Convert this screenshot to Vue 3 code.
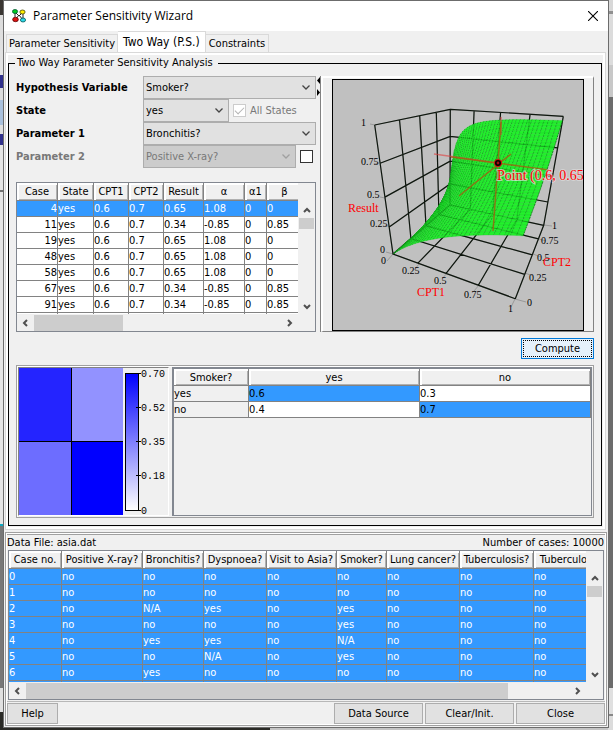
<script setup>
import { ref } from 'vue'

const tabs = ['Parameter Sensitivity', 'Two Way (P.S.)', 'Constraints']
const activeTab = ref('Two Way (P.S.)')

const caseCols = [
  { name: 'Case', width: 41 },
  { name: 'State', width: 36 },
  { name: 'CPT1', width: 35 },
  { name: 'CPT2', width: 35 },
  { name: 'Result', width: 40 },
  { name: 'α', width: 41 },
  { name: 'α1', width: 22 },
  { name: 'β', width: 36 },
]
const high = ['yes', '0.6', '0.7', '0.65', '1.08', '0', '0']
const low = ['yes', '0.6', '0.7', '0.34', '-0.85', '0', '0.85']
const caseRows = [
  ['4', ...high],
  ['11', ...low],
  ['19', ...high],
  ['48', ...high],
  ['58', ...high],
  ['67', ...low],
  ['91', ...low],
]

const dataCols = [
  { name: 'Case no.', width: 53 },
  { name: 'Positive X-ray?', width: 81 },
  { name: 'Bronchitis?', width: 61 },
  { name: 'Dyspnoea?', width: 63 },
  { name: 'Visit to Asia?', width: 70 },
  { name: 'Smoker?', width: 50 },
  { name: 'Lung cancer?', width: 73 },
  { name: 'Tuberculosis?', width: 74 },
  { name: 'Tuberculo', width: 60 },
]
const dataRows = [
  ['0', 'no', 'no', 'no', 'no', 'no', 'no', 'no', 'no'],
  ['1', 'no', 'no', 'no', 'no', 'no', 'no', 'no', 'no'],
  ['2', 'no', 'N/A', 'yes', 'no', 'yes', 'no', 'no', 'no'],
  ['3', 'no', 'no', 'no', 'no', 'yes', 'no', 'no', 'no'],
  ['4', 'no', 'yes', 'yes', 'no', 'N/A', 'no', 'no', 'no'],
  ['5', 'no', 'no', 'N/A', 'no', 'yes', 'no', 'no', 'no'],
  ['6', 'no', 'yes', 'no', 'no', 'no', 'no', 'no', 'no'],
]

const scale = [
  { label: '0.70', y: 5 },
  { label: '0.52', y: 39 },
  { label: '0.35', y: 73 },
  { label: '0.18', y: 107 },
  { label: '0', y: 142 },
]

// Unit-cube corners [cpt1, cpt2, result] with screen position and perspective weight
const corners = [
  { c: [0, 0, 0], p: [60, 174], w: 1 },
  { c: [1, 0, 0], p: [182.3, 218.7], w: 0.767 },
  { c: [0, 1, 0], p: [117, 125], w: 1.372 },
  { c: [1, 1, 0], p: [210.7, 145.3], w: 1.138 },
  { c: [0, 0, 1], p: [41.7, 45], w: 0.79 },
  { c: [1, 0, 1], p: [202.3, 57], w: 0.557 },
  { c: [0, 1, 1], p: [117.3, 29.3], w: 1.16 },
  { c: [1, 1, 1], p: [230.3, 36.3], w: 0.93 },
]
function project(x, y, z) {
  let sx = 0
  let sy = 0
  let sw = 0
  for (const { c, p, w } of corners) {
    const k = (c[0] ? x : 1 - x) * (c[1] ? y : 1 - y) * (c[2] ? z : 1 - z) * w
    sx += k * p[0]
    sy += k * p[1]
    sw += k
  }
  return [(sx / sw).toFixed(1), (sy / sw).toFixed(1)]
}
const path = (pts) => 'M' + pts.map((p) => project(...p).join(' ')).join('L')
const steps = [0, 0.25, 0.5, 0.75, 1]
const frame = steps.flatMap((t) => [
  path([[t, 0, 0], [t, 1, 0], [t, 1, 1]]),
  path([[0, t, 1], [0, t, 0], [1, t, 0]]),
  path([[0, 0, t], [0, 1, t], [1, 1, t]]),
]).join('')

function result(x, y) {
  const k = 0.04 + 1.1 * Math.pow(1 - y, 1.14)
  return (x + 0.006 * y) / (x + k)
}
const N = 36
const quads = []
for (let j = N; j > 0; j--) {
  for (let i = 0; i < N; i++) {
    const pts = [[i, j], [i + 1, j], [i + 1, j - 1], [i, j - 1]].map(([a, b]) => {
      const x = Math.pow(a / N, 1.2)
      return [x, b / N, result(x, b / N)]
    })
    quads.push({ face: path(pts) + 'Z', edge: path([pts[1], pts[2]]) })
  }
}

const ticks = [
  { t: '1', x: 28, y: 46 },
  { t: '0.75', x: 28, y: 85 },
  { t: '0.5', x: 34, y: 118 },
  { t: '0.25', x: 37, y: 147 },
  { t: '0', x: 47, y: 173 },
  { t: '0', x: 48, y: 184 },
  { t: '0.25', x: 69, y: 194 },
  { t: '0.5', x: 101, y: 204 },
  { t: '0.75', x: 131, y: 218 },
  { t: '1', x: 175, y: 232 },
  { t: '0', x: 194, y: 226 },
  { t: '0.25', x: 196, y: 201 },
  { t: '0.5', x: 204, y: 181 },
  { t: '0.75', x: 208, y: 164 },
  { t: '1', x: 219, y: 149 },
]
</script>

<template>
  <div class="desktop">
    <main class="window">
      <header class="title-bar">
        <svg class="app-icon" viewBox="0 0 14 14" aria-hidden="true">
          <path d="M3 3L7 7L11 3M3 11L7 6L11 11M3 3V8M11 5V9" fill="none" stroke="#222" />
          <ellipse cx="3" cy="2.5" rx="2.6" ry="2" fill="#0c2" stroke="#053" stroke-width=".8" />
          <ellipse cx="10.5" cy="3" rx="2.6" ry="2" fill="#fe0" stroke="#440" stroke-width=".8" />
          <ellipse cx="3.5" cy="10.5" rx="2.8" ry="2.2" fill="#e01010" stroke="#500" stroke-width=".8" />
          <ellipse cx="11" cy="11" rx="2.6" ry="2" fill="#2cd8e8" stroke="#055" stroke-width=".8" />
        </svg>
        <h1>Parameter Sensitivity Wizard</h1>
        <button class="close-x" type="button" aria-label="Close window">
          <svg viewBox="0 0 10 10"><path d="M0 0L10 10M10 0L0 10" stroke="#000" stroke-width="1.1" /></svg>
        </button>
      </header>

      <nav class="tabs" role="tablist">
        <button
          v-for="tab in tabs"
          :key="tab"
          type="button"
          role="tab"
          :class="{ active: tab === activeTab }"
          :aria-selected="tab === activeTab"
          @click="activeTab = tab"
        >{{ tab }}</button>
      </nav>

      <section class="tab-page">
        <fieldset class="group">
          <legend>Two Way Parameter Sensitivity Analysis</legend>
          <div class="group-body">
            <div class="split">
              <div class="left">
                <div class="form">
                  <label for="hypothesis">Hypothesis Variable</label>
                  <div class="line">
                    <span class="combo wide">
                      <select id="hypothesis"><option>Smoker?</option></select>
                      <svg viewBox="0 0 8 5"><path d="M0.5 0.5L4 4L7.5 0.5" /></svg>
                    </span>
                  </div>
                  <label for="state">State</label>
                  <div class="line">
                    <span class="combo short">
                      <select id="state"><option>yes</option></select>
                      <svg viewBox="0 0 8 5"><path d="M0.5 0.5L4 4L7.5 0.5" /></svg>
                    </span>
                    <label class="check muted"><input type="checkbox" checked disabled /> All States</label>
                  </div>
                  <label for="param1">Parameter 1</label>
                  <div class="line">
                    <span class="combo wide">
                      <select id="param1"><option>Bronchitis?</option></select>
                      <svg viewBox="0 0 8 5"><path d="M0.5 0.5L4 4L7.5 0.5" /></svg>
                    </span>
                  </div>
                  <label class="muted" for="param2">Parameter 2</label>
                  <div class="line">
                    <span class="combo wide off">
                      <select id="param2" disabled><option>Positive X-ray?</option></select>
                      <svg viewBox="0 0 8 5"><path d="M0.5 0.5L4 4L7.5 0.5" /></svg>
                    </span>
                    <label class="check solo"><input type="checkbox" aria-label="Use parameter 2" /></label>
                  </div>
                </div>

                <div class="scroll-pane cases">
                  <div class="viewport">
                    <table>
                      <colgroup><col v-for="c in caseCols" :key="c.name" :style="{ width: c.width + 'px' }" /></colgroup>
                      <thead><tr><th v-for="c in caseCols" :key="c.name">{{ c.name }}</th></tr></thead>
                      <tbody>
                        <tr v-for="(row, r) in caseRows" :key="r" :class="{ selected: r === 0 }">
                          <td v-for="(cell, i) in row" :key="i">{{ cell }}</td>
                        </tr>
                        <tr><td v-for="c in caseCols" :key="c.name"></td></tr>
                      </tbody>
                    </table>
                  </div>
                  <div class="vbar">
                    <svg viewBox="0 0 8 6"><path d="M1 5L4 2L7 5" /></svg>
                    <i class="thumb"></i>
                    <svg class="last" viewBox="0 0 8 6"><path d="M1 1L4 4L7 1" /></svg>
                  </div>
                  <div class="hbar">
                    <svg viewBox="0 0 6 8"><path d="M5 1L2 4L5 7" /></svg>
                    <i class="thumb"></i>
                    <svg class="last" viewBox="0 0 6 8"><path d="M1 1L4 4L1 7" /></svg>
                  </div>
                </div>
              </div>

              <div class="divider">
                <svg viewBox="0 0 4 20"><path d="M3 1V8L0 4.5ZM0 13V20L3 16.5Z" /></svg>
              </div>

              <div class="plot-pane">
                <svg class="plot" viewBox="0 0 250 250" role="img" aria-label="Result surface over CPT1 and CPT2">
                  <path
                    d="M42 45l-5 -1M46 83l-5 1M52 118l-5 -1M57 147l-5 -2M60 174l-7 -2M60 174l-6 7M86 184l-5 6M114 193l-5 6M146 205l-5 6M182 219l-4 8M182 219l11 3M192 193l8 3M200 174l8 3M206 159l7 2M211 145l8 1"
                    stroke="#999"
                    fill="none"
                  />
                  <path :d="frame" class="frame" />
                  <g class="surface">
                    <template v-for="(q, i) in quads" :key="i">
                      <path class="face" :d="q.face" />
                      <path class="edge" :d="q.edge" />
                    </template>
                  </g>
                  <path :d="frame" class="frame ghost" />
                  <path class="probe faint" d="M101 74L165 83M168 37V55" />
                  <path class="probe" d="M118 77L216 90M168 42L160 151M178 74L126 116" />
                  <circle cx="165" cy="83" r="4" fill="#d01010" />
                  <circle cx="165" cy="83" r="2.2" fill="#a01010" stroke="#000" stroke-width="1.6" />
                  <g class="tick-text"><text v-for="(k, i) in ticks" :key="i" :x="k.x" :y="k.y">{{ k.t }}</text></g>
                  <g class="axis-text">
                    <text x="15" y="132">Result</text>
                    <text x="84" y="216">CPT1</text>
                    <text x="210" y="186">CPT2</text>
                  </g>
                  <text class="point-text" x="164" y="100">Point (0.6, 0.65</text>
                </svg>
              </div>
            </div>

            <div class="actions"><button class="btn primary" type="button">Compute</button></div>

            <div class="results">
              <div class="heat">
                <div class="map"><i></i><i></i><i></i><i></i></div>
                <svg class="legend" viewBox="0 0 45 147">
                  <defs>
                    <linearGradient id="blues" x1="0" y1="0" x2="0" y2="1">
                      <stop offset="0" stop-color="#00f" /><stop offset="1" stop-color="#fff" />
                    </linearGradient>
                  </defs>
                  <rect x="2.5" y="5.5" width="13" height="137" fill="url(#blues)" stroke="#000" />
                  <g v-for="s in scale" :key="s.label">
                    <path :d="`M13 ${s.y + 0.5}H18`" stroke="#000" />
                    <text x="18" :y="s.y + 4">{{ s.label }}</text>
                  </g>
                </svg>
              </div>
              <div class="prob">
                <table>
                  <colgroup><col class="row-head" /><col /><col /></colgroup>
                  <thead><tr><th>Smoker?</th><th>yes</th><th>no</th></tr></thead>
                  <tbody>
                    <tr><td class="name">yes</td><td class="hit">0.6</td><td>0.3</td></tr>
                    <tr><td class="name">no</td><td>0.4</td><td class="hit">0.7</td></tr>
                  </tbody>
                </table>
              </div>
            </div>
          </div>
        </fieldset>
      </section>

      <section class="data">
        <div class="data-info"><span>Data File: asia.dat</span><span>Number of cases: 10000</span></div>
        <div class="scroll-pane records">
          <div class="viewport">
            <table>
              <colgroup><col v-for="c in dataCols" :key="c.name" :style="{ width: c.width + 'px' }" /></colgroup>
              <thead><tr><th v-for="c in dataCols" :key="c.name">{{ c.name }}</th></tr></thead>
              <tbody>
                <tr v-for="row in dataRows" :key="row[0]" class="selected">
                  <td v-for="(cell, i) in row" :key="i">{{ cell }}</td>
                </tr>
                <tr class="selected"><td v-for="c in dataCols" :key="c.name"></td></tr>
              </tbody>
            </table>
          </div>
          <div class="vbar">
            <svg viewBox="0 0 8 6"><path d="M1 5L4 2L7 5" /></svg>
            <i class="thumb"></i>
            <svg class="last" viewBox="0 0 8 6"><path d="M1 1L4 4L7 1" /></svg>
          </div>
          <div class="hbar">
            <svg viewBox="0 0 6 8"><path d="M5 1L2 4L5 7" /></svg>
            <i class="thumb"></i>
            <svg class="last" viewBox="0 0 6 8"><path d="M1 1L4 4L1 7" /></svg>
          </div>
        </div>
        <footer class="bar">
          <button class="btn help" type="button">Help</button>
          <button class="btn" type="button">Data Source</button>
          <button class="btn" type="button">Clear/Init.</button>
          <button class="btn" type="button">Close</button>
        </footer>
      </section>
    </main>
  </div>
</template>

<style>
body {
  margin: 0;
}
</style>

<style scoped>
* {
  box-sizing: border-box;
}
.desktop {
  min-height: 100vh;
  padding: 0 4px 2px 3px;
  display: flex;
  font: 11px/14px 'DejaVu Sans Condensed', 'DejaVu Sans', sans-serif;
  color: #000;
  background:
    linear-gradient(#3a3632 15px, #dcdcdc 15px, #e4e4e4 75px, #30308c 75px, #30308c 88px, #dcdcdc 88px, #dcdcdc 100px, #a9c0dc 100px, #a9c0dc 125px, #e0e0e0 125px, #e0e0e0 134px, #30308c 134px, #30308c 145px, #e4e4e4 145px, #e4e4e4 190px, #707070 190px, #707070 192px, #e4e4e4 192px, #e4e4e4 524px, #10a8c0 524px, #10a8c0 526px, #787878 526px, #787878 688px, #e0e0e0 688px, #e0e0e0 712px, #2a2a26 712px) left top / 4px 100% no-repeat,
    linear-gradient(#d8d8d8 11px, #909090 11px, #909090 14px, #dcdcdc 14px, #dcdcdc 65px, #c8c8c8 65px, #c8c8c8 97px, #6c6c6c 97px, #6c6c6c 688px, #e0e0e0 688px, #e0e0e0 714px, #888 714px, #888 716px, #dcdcdc 716px) right top / 5px 100% no-repeat,
    linear-gradient(90deg, #2a2a26 44%, #c4c4c4 44%) left bottom / 100% 3px no-repeat;
}
.window {
  flex: 1;
  min-width: 0;
  display: flex;
  flex-direction: column;
  border: 1px solid #6c6c6c;
  background: #f0f0f0;
}
.title-bar {
  height: 30px;
  display: flex;
  align-items: center;
  background: #fff;
  padding: 0 10px 0 8px;
}
.app-icon {
  width: 14px;
  height: 14px;
}
h1 {
  flex: 1;
  margin: 0 0 0 7px;
  font: 12px/16px 'Open Sans', 'Noto Sans', sans-serif;
}
button {
  font: inherit;
  color: inherit;
}
.close-x {
  border: 0;
  background: none;
  padding: 0;
  display: flex;
}
.close-x svg {
  width: 10px;
  height: 10px;
}
.tabs {
  height: 21px;
  display: flex;
  align-items: flex-end;
  padding-left: 2px;
}
.tabs button {
  height: 18px;
  padding: 0 2px;
  border: 1px solid #d9d9d9;
  border-bottom: 0;
  background: #f0f0f0;
  white-space: nowrap;
}
.tabs button + button {
  border-left: 0;
  padding: 0 3px;
}
.tabs button.active {
  height: 21px;
  padding: 0 5px 1px;
  font-size: 12px;
  background: #fff;
}
.tab-page {
  flex: 1;
  margin: 0 2px 2px 1px;
  border: 1px solid #d9d9d9;
  padding: 3px 3px 3px 2px;
  box-shadow: inset 0 0 0 2px #fff;
}
.group {
  margin: 0;
  padding: 0;
  min-width: 0;
  height: 100%;
  border: 1px solid #000;
}
legend {
  margin-left: 6px;
  padding: 0 5px 0 2px;
}
.group-body {
  padding: 6px 7px 7px;
}
.split {
  display: grid;
  grid-template-columns: 300px 5px 1fr;
}
.form {
  display: grid;
  grid-template-columns: 127px 1fr;
  grid-auto-rows: 23px;
  align-items: center;
  margin-bottom: 14px;
  font-weight: bold;
}
.line {
  display: flex;
  align-items: center;
  font-weight: normal;
}
.combo {
  display: grid;
  align-items: center;
  height: 23px;
}
.combo.wide {
  flex: 1;
}
.combo.short {
  width: 86px;
}
.combo > * {
  grid-area: 1 / 1;
}
.combo svg {
  width: 8px;
  height: 5px;
  justify-self: end;
  margin-right: 6px;
  pointer-events: none;
  fill: none;
  stroke: #444;
  stroke-width: 1.3;
}
select {
  appearance: none;
  width: 100%;
  height: 23px;
  margin: 0;
  padding: 0 2px;
  border: 1px solid #adadad;
  border-radius: 0;
  background: #e1e1e1;
  font: inherit;
  color: #000;
}
.off select {
  background: #ccc;
  color: #787878;
  opacity: 1;
}
.combo.off svg {
  stroke: #a0a0a0;
}
.muted {
  color: #787878;
}
.check {
  display: flex;
  align-items: center;
  gap: 4px;
  margin-left: 4px;
}
.check.solo {
  margin-right: 3px;
}
input {
  appearance: none;
  width: 13px;
  height: 13px;
  margin: 0;
  border: 1px solid #333;
  background: #fff;
  display: grid;
  place-items: center;
}
input:disabled {
  border-color: #ccc;
}
input:checked::before {
  content: '';
  width: 8px;
  height: 4px;
  margin-bottom: 2px;
  border: solid #b4b4b4;
  border-width: 0 0 1px 1px;
  transform: rotate(-45deg);
}
.scroll-pane {
  display: grid;
  grid-template-columns: minmax(0, 1fr) 17px;
  grid-template-rows: 132px 16px;
  border: 1px solid #828790;
  background: #f0f0f0;
}
.viewport {
  overflow: hidden;
  border-bottom: 1px solid #f0f0f0;
}
table {
  table-layout: fixed;
  width: 10px;
  border-spacing: 0;
}
th,
td {
  padding: 0;
  white-space: nowrap;
  border: solid #828282;
  border-width: 0 1px 1px 0;
  text-align: left;
  line-height: 15px;
}
td {
  height: 16px;
  background: #fff;
}
th {
  height: 18px;
  font-weight: normal;
  text-align: center;
  background: #f0f0f0;
  box-shadow: inset 2px 2px #fff, inset -1px -1px #b0b0b0;
}
.selected td {
  background: #3399ff;
  color: #fff;
}
.cases td:first-child {
  text-align: right;
}
.vbar {
  display: flex;
  flex-direction: column;
  align-items: center;
  padding: 24px 1px 5px;
}
.vbar svg {
  width: 8px;
  height: 6px;
}
.hbar svg {
  width: 6px;
  height: 8px;
}
.vbar svg,
.hbar svg {
  flex: none;
  fill: none;
  stroke: #505050;
  stroke-width: 2;
}
.vbar .thumb {
  width: 15px;
  height: 11px;
  margin-top: 5px;
  background: #cdcdcd;
}
.hbar {
  display: flex;
  align-items: center;
  padding: 0 5px;
}
.hbar .thumb {
  width: 33%;
  height: 16px;
  margin-left: 6px;
  background: #cdcdcd;
}
.records .hbar .thumb {
  width: 85%;
}
.vbar .last {
  margin-top: auto;
}
.hbar .last {
  margin-left: auto;
}
.divider {
  padding-left: 1px;
  border-right: 1px solid #828282;
}
.divider svg {
  width: 4px;
  height: 20px;
  display: block;
}
.plot-pane {
  display: flex;
  justify-content: center;
  align-items: center;
  border: 1px solid #fff;
  border-width: 2px 1px 1px 2px;
  border-bottom-color: #828282;
  border-right-color: #828282;
}
.plot {
  width: 252px;
  height: 252px;
  border: 1px solid #000;
  background: #c0c0c0;
  overflow: hidden;
}
.frame {
  fill: none;
  stroke: #111;
  stroke-width: 1.2;
}
.frame.ghost {
  stroke: #030;
  opacity: 0.18;
}
.face {
  fill: #22f02c;
  stroke: #1cc828;
  stroke-width: 0.3;
}
.edge {
  fill: none;
  stroke: #044a0c;
  stroke-width: 0.7;
  stroke-dasharray: 1 1;
}
.probe {
  fill: none;
  stroke: #a06010;
  stroke-width: 1.5;
  opacity: 0.8;
}
.probe.faint {
  stroke: #e04040;
  opacity: 0.6;
}
.tick-text {
  font: 10px 'Liberation Serif', serif;
}
.axis-text {
  font: 12px 'Liberation Serif', serif;
  fill: #f00;
}
.point-text {
  font: 14px 'Liberation Serif', serif;
  fill: #f00;
  stroke: #ddd;
  stroke-width: 2;
  stroke-opacity: 0.7;
  paint-order: stroke;
}
.actions {
  display: flex;
  justify-content: flex-end;
  padding: 6px 0;
}
.btn {
  height: 21px;
  width: 89px;
  padding: 0;
  border: 1px solid #adadad;
  background: #e1e1e1;
}
.btn.primary {
  width: 73px;
  border-color: #0078d7;
  background: #e5f1fb;
  outline: 1px dotted #000;
  outline-offset: -3px;
}
.results {
  display: flex;
  gap: 3px;
  padding: 1px;
  border: 1px solid #a0a0a0;
  box-shadow: inset 1px 1px #fff;
}
.heat {
  display: flex;
  width: 151px;
  height: 149px;
  border: 1px solid #828282;
  border-right-color: #fff;
  border-bottom-color: #fff;
}
.map {
  width: 104px;
  display: grid;
  grid-template-columns: 1fr 1fr;
  grid-template-rows: 1fr 1fr;
  gap: 1px;
  background: #000;
}
.map i:nth-child(1) {
  background: #2424ff;
}
.map i:nth-child(2) {
  background: #9292ff;
}
.map i:nth-child(3) {
  background: #6d6dff;
}
.map i:nth-child(4) {
  background: #00f;
}
.legend {
  width: 45px;
  height: 147px;
  overflow: visible;
  font: 10px 'Liberation Mono', monospace;
}
.prob {
  flex: 1;
  border: 1px solid #828790;
  border-top-width: 2px;
  border-left-width: 2px;
}
.prob table {
  width: 100%;
}
.prob .row-head {
  width: 75px;
}
.prob th {
  height: 17px;
}
.prob .name {
  background: #f0f0f0;
}
.prob .hit {
  background: #3399ff;
}
.data {
  margin: 0 1px 1px;
  padding: 2px 1px 1px;
  border: 1px solid #a0a0a0;
  box-shadow: inset 0 0 0 1px #fff, inset 0 2px #a0a0a0;
}
.data-info {
  display: flex;
  justify-content: space-between;
  height: 15px;
  padding-right: 1px;
  line-height: 15px;
}
.records {
  margin: 0 1px;
}
.bar {
  display: flex;
  gap: 2px;
  margin-top: 1px;
  padding-top: 1px;
  border-top: 1px solid #b8b8b8;
}
.bar .help {
  width: 51px;
  margin-right: auto;
}
</style>
